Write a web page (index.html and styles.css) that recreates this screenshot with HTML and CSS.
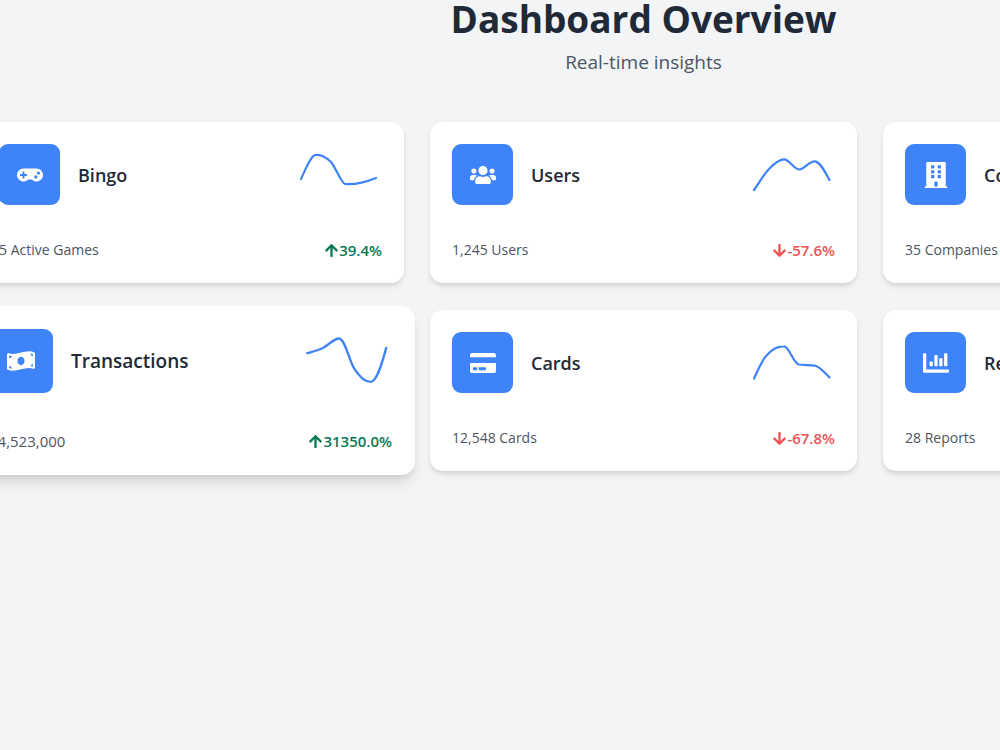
FILE: index.html
```html
<!DOCTYPE html>
<html lang="en">
<head>
<meta charset="utf-8">
<title>Dashboard Overview</title>
<link rel="stylesheet" href="styles.css">
</head>
<body>
<main class="dashboard">
  <header class="header">
    <h1 class="header-title">Dashboard Overview</h1>
    <p class="header-subtitle">Real-time insights</p>
  </header>
  <section class="cards">
    <article class="card">
      <div class="card-top">
        <span class="card-icon"><svg class="icon" viewBox="0 0 640 512" aria-hidden="true"><path d="M480.07 96H160a160 160 0 1 0 114.24 272h91.52A160 160 0 1 0 480.07 96zM248 268a12 12 0 0 1-12 12h-52v52a12 12 0 0 1-12 12h-24a12 12 0 0 1-12-12v-52H84a12 12 0 0 1-12-12v-24a12 12 0 0 1 12-12h52v-52a12 12 0 0 1 12-12h24a12 12 0 0 1 12 12v52h52a12 12 0 0 1 12 12zm216 76a40 40 0 1 1 40-40 40 40 0 0 1-40 40zm64-96a40 40 0 1 1 40-40 40 40 0 0 1-40 40z"/></svg></span>
        <h2 class="card-title">Bingo</h2>
        <svg class="spark" viewBox="0 0 86 61" aria-hidden="true"><path d="M5 35C10 24 15 12 19 11C24 10 30 13 35 18C40 24 45 39 49 40C59 41 70 38 80 34"/></svg>
      </div>
      <div class="card-bottom">
        <span class="card-value">5 Active Games</span>
        <span class="trend trend-up"><svg class="arrow" viewBox="0 0 448 512" aria-hidden="true"><path d="M34.9 289.5l-22.2-22.2c-9.4-9.4-9.4-24.6 0-33.9L207 39c9.4-9.4 24.6-9.4 33.9 0l194.3 194.3c9.4 9.4 9.4 24.6 0 33.9L413 289.4c-9.5 9.5-25 9.3-34.3-.4L264 168.6V456c0 13.3-10.7 24-24 24h-32c-13.3 0-24-10.7-24-24V168.6L69.2 289.1c-9.3 9.8-24.8 10-34.3.4z"/></svg>39.4%</span>
      </div>
    </article>
    <article class="card">
      <div class="card-top">
        <span class="card-icon"><svg class="icon" viewBox="0 0 640 512" aria-hidden="true"><path d="M96 224c35.3 0 64-28.7 64-64s-28.7-64-64-64-64 28.7-64 64 28.7 64 64 64zm448 0c35.3 0 64-28.7 64-64s-28.7-64-64-64-64 28.7-64 64 28.7 64 64 64zm32 32h-64c-17.6 0-33.5 7.1-45.1 18.6 40.3 22.1 68.9 62 75.1 109.4h66c17.7 0 32-14.3 32-32v-32c0-35.3-28.7-64-64-64zm-256 0c61.9 0 112-50.1 112-112S381.9 32 320 32 208 82.1 208 144s50.1 112 112 112zm76.8 32h-8.3c-20.8 10-43.9 16-68.5 16s-47.6-6-68.5-16h-8.3C179.6 288 128 339.6 128 403.2V432c0 26.5 21.5 48 48 48h288c26.5 0 48-21.5 48-48v-28.8c0-63.6-51.6-115.2-115.2-115.2zm-223.7-13.4C161.5 263.1 145.6 256 128 256H64c-35.3 0-64 28.7-64 64v32c0 17.7 14.3 32 32 32h65.9c6.3-47.4 34.9-87.3 75.2-109.4z"/></svg></span>
        <h2 class="card-title">Users</h2>
        <svg class="spark" viewBox="0 0 86 61" aria-hidden="true"><path d="M5 46C10 39 15 30 20 25C25 19.5 30 15.5 35 15.3C40 15 45 25.5 50.5 25.5C55 25.5 60 17.3 65.5 17.3C71 17.3 76 28 80.5 36"/></svg>
      </div>
      <div class="card-bottom">
        <span class="card-value">1,245 Users</span>
        <span class="trend trend-down"><svg class="arrow" viewBox="0 0 448 512" aria-hidden="true"><path transform="matrix(1 0 0 -1 0 512)" d="M34.9 289.5l-22.2-22.2c-9.4-9.4-9.4-24.6 0-33.9L207 39c9.4-9.4 24.6-9.4 33.9 0l194.3 194.3c9.4 9.4 9.4 24.6 0 33.9L413 289.4c-9.5 9.5-25 9.3-34.3-.4L264 168.6V456c0 13.3-10.7 24-24 24h-32c-13.3 0-24-10.7-24-24V168.6L69.2 289.1c-9.3 9.8-24.8 10-34.3.4z"/></svg>-57.6%</span>
      </div>
    </article>
    <article class="card">
      <div class="card-top">
        <span class="card-icon"><svg class="icon" viewBox="0 0 448 512" aria-hidden="true"><path fill-rule="evenodd" d="M436 480h-20V24c0-13.3-10.7-24-24-24H56C42.7 0 32 10.7 32 24v456H12c-6.6 0-12 5.4-12 12v20h448v-20c0-6.6-5.4-12-12-12zM128 64h64v64h-64zM256 64h64v64h-64zM128 160h64v64h-64zM256 160h64v64h-64zM128 256h64v64h-64zM256 256h64v64h-64zM192 384h64v96h-64z"/></svg></span>
        <h2 class="card-title">Companies</h2>
      </div>
      <div class="card-bottom">
        <span class="card-value">35 Companies</span>
      </div>
    </article>
    <article class="card card-raised">
      <div class="card-top">
        <span class="card-icon"><svg class="icon" viewBox="0 0 640 512" aria-hidden="true"><path d="M621.16 54.46C582.37 38.19 543.55 32 504.75 32c-123.17-.01-246.33 62.34-369.5 62.34-30.89 0-61.76-3.92-92.65-13.72-3.47-1.1-6.95-1.62-10.35-1.62C15.04 79 0 92.32 0 110.81v317.26c0 12.63 7.23 24.6 18.84 29.46C57.63 473.81 96.45 480 135.25 480c123.17 0 246.34-62.35 369.51-62.35 30.89 0 61.76 3.92 92.65 13.72 3.47 1.1 6.95 1.62 10.35 1.62 17.21 0 32.25-13.32 32.25-31.81V83.93c-.01-12.64-7.24-24.6-18.85-29.47zM48 132.22c20.12 5.04 41.12 7.57 62.72 8.93C104.84 170.54 79 192.69 48 192.69v-60.47zm0 285v-47.78c34.37 0 62.18 27.27 63.71 61.4-22.53-1.81-43.59-6.31-63.71-13.62zM320 352c-44.19 0-80-42.99-80-96 0-53.02 35.82-96 80-96s80 42.98 80 96c0 53.03-35.83 96-80 96zm272 27.78c-17.52-4.39-35.71-6.85-54.32-8.44 5.87-26.08 27.5-45.88 54.32-49.28v57.72zm0-236.11c-30.89-3.91-54.86-29.7-55.81-61.55 19.54 2.17 38.09 6.23 55.81 12.66v48.89z"/></svg></span>
        <h2 class="card-title">Transactions</h2>
        <svg class="spark" viewBox="0 0 86 61" aria-hidden="true"><path d="M5 23C10 21.5 15 20.5 20 18C25 15.5 30 9.5 35 9C41 8.5 45 30 50 38C54 44 60 50.5 65.5 50.5C72 50.5 77 30 80.5 18"/></svg>
      </div>
      <div class="card-bottom">
        <span class="card-value">$4,523,000</span>
        <span class="trend trend-up"><svg class="arrow" viewBox="0 0 448 512" aria-hidden="true"><path d="M34.9 289.5l-22.2-22.2c-9.4-9.4-9.4-24.6 0-33.9L207 39c9.4-9.4 24.6-9.4 33.9 0l194.3 194.3c9.4 9.4 9.4 24.6 0 33.9L413 289.4c-9.5 9.5-25 9.3-34.3-.4L264 168.6V456c0 13.3-10.7 24-24 24h-32c-13.3 0-24-10.7-24-24V168.6L69.2 289.1c-9.3 9.8-24.8 10-34.3.4z"/></svg>31350.0%</span>
      </div>
    </article>
    <article class="card">
      <div class="card-top">
        <span class="card-icon"><svg class="icon" viewBox="0 0 576 512" aria-hidden="true"><path d="M0 432c0 26.5 21.5 48 48 48h480c26.5 0 48-21.5 48-48V256H0v176zm192-68c0-6.6 5.4-12 12-12h136c6.6 0 12 5.4 12 12v40c0 6.6-5.4 12-12 12H204c-6.6 0-12-5.4-12-12v-40zm-128 0c0-6.6 5.4-12 12-12h72c6.6 0 12 5.4 12 12v40c0 6.6-5.4 12-12 12H76c-6.6 0-12-5.4-12-12v-40zM576 80v48H0V80c0-26.5 21.5-48 48-48h480c26.5 0 48 21.5 48 48z"/></svg></span>
        <h2 class="card-title">Cards</h2>
        <svg class="spark" viewBox="0 0 86 61" aria-hidden="true"><path d="M5 46.5C9 38 13 28 18 23C23 17 30 14.3 35 14.3C40 14 44 31 50 32.5C56 33.5 62 32.5 67 34C72 36 76 41 80.5 45.5"/></svg>
      </div>
      <div class="card-bottom">
        <span class="card-value">12,548 Cards</span>
        <span class="trend trend-down"><svg class="arrow" viewBox="0 0 448 512" aria-hidden="true"><path transform="matrix(1 0 0 -1 0 512)" d="M34.9 289.5l-22.2-22.2c-9.4-9.4-9.4-24.6 0-33.9L207 39c9.4-9.4 24.6-9.4 33.9 0l194.3 194.3c9.4 9.4 9.4 24.6 0 33.9L413 289.4c-9.5 9.5-25 9.3-34.3-.4L264 168.6V456c0 13.3-10.7 24-24 24h-32c-13.3 0-24-10.7-24-24V168.6L69.2 289.1c-9.3 9.8-24.8 10-34.3.4z"/></svg>-67.8%</span>
      </div>
    </article>
    <article class="card">
      <div class="card-top">
        <span class="card-icon"><svg class="icon" viewBox="0 0 512 512" aria-hidden="true"><path d="M332.8 320h38.4c6.4 0 12.8-6.4 12.8-12.8V172.8c0-6.4-6.4-12.8-12.8-12.8h-38.4c-6.4 0-12.8 6.4-12.8 12.8v134.4c0 6.4 6.4 12.8 12.8 12.8zm96 0h38.4c6.4 0 12.8-6.4 12.8-12.8V76.8c0-6.4-6.4-12.8-12.8-12.8h-38.4c-6.4 0-12.8 6.4-12.8 12.8v230.4c0 6.4 6.4 12.8 12.8 12.8zm-288 0h38.4c6.4 0 12.8-6.4 12.8-12.8v-70.4c0-6.4-6.4-12.8-12.8-12.8h-38.4c-6.4 0-12.8 6.4-12.8 12.8v70.4c0 6.4 6.4 12.8 12.8 12.8zm96 0h38.4c6.4 0 12.8-6.4 12.8-12.8V108.8c0-6.4-6.4-12.8-12.8-12.8h-38.4c-6.4 0-12.8 6.4-12.8 12.8v198.4c0 6.4 6.4 12.8 12.8 12.8zM496 384H64V80c0-8.84-7.16-16-16-16H16C7.16 64 0 71.16 0 80v336c0 17.67 14.33 32 32 32h464c8.84 0 16-7.16 16-16v-32c0-8.84-7.16-16-16-16z"/></svg></span>
        <h2 class="card-title">Reports</h2>
      </div>
      <div class="card-bottom">
        <span class="card-value">28 Reports</span>
      </div>
    </article>
  </section>
</main>
</body>
</html>
```

FILE: styles.css
```css
* {
  box-sizing: border-box;
}

body {
  margin: 0;
  min-height: 100vh;
  overflow: hidden;
  background: #f3f4f6;
  color: #1f2937;
  font-family: "Segoe UI", "Open Sans", "Noto Sans", sans-serif;
}

/* The board is wider than the window and runs off both sides. */
.dashboard {
  margin: 0 -310px 0 -23px;
}

.header {
  padding-bottom: 46px;
  text-align: center;
}

.header-title {
  margin: 0;
  font-size: 37px;
  font-weight: 700;
  line-height: 38px;
}

.header-subtitle {
  margin: 10px 0 0;
  color: #4b5563;
  font-size: 19px;
  line-height: 28px;
}

.cards {
  display: grid;
  grid-template-columns: repeat(3, 1fr);
  gap: 27px 26px;
}

.card {
  display: flex;
  flex-direction: column;
  gap: 34px;
  padding: 22px;
  border-radius: 13px;
  background: #fff;
  box-shadow: 0 4px 6px -1px rgba(0, 0, 0, 0.1), 0 2px 4px -1px rgba(0, 0, 0, 0.08);
}

.card-top {
  display: flex;
  align-items: center;
  gap: 18px;
}

.card-icon {
  display: flex;
  align-items: center;
  justify-content: center;
  width: 61px;
  height: 61px;
  border-radius: 9px;
  background: #3f83f8;
}

.icon {
  width: 26px;
  height: 26px;
  fill: #fff;
}

.card-title {
  margin: 0;
  font-size: 18px;
  font-weight: 600;
  line-height: 28px;
}

.spark {
  width: 86px;
  height: 61px;
  margin-left: auto;
  fill: none;
  stroke: #3f83f8;
  stroke-width: 2.2;
  stroke-linecap: round;
}

.card-bottom {
  display: flex;
  align-items: center;
  justify-content: space-between;
  line-height: 22px;
}

.card-value {
  color: #4b5563;
  font-size: 14px;
}

.trend {
  display: flex;
  align-items: center;
  font-size: 15px;
  font-weight: 600;
}

.trend-up {
  color: #057a55;
}

.trend-down {
  color: #f05252;
}

.arrow {
  width: 15px;
  height: 15px;
  fill: currentColor;
}

.card-raised {
  gap: 37px;
  margin: -4px -11px;
  padding: 23px;
  border-radius: 14px;
  box-shadow: 0 10px 15px -3px rgba(0, 0, 0, 0.12), 0 4px 6px -2px rgba(0, 0, 0, 0.08);
}

.card-raised .card-icon {
  width: 64px;
  height: 64px;
}

.card-raised .icon {
  width: 28px;
  height: 28px;
}

.card-raised .card-title {
  font-size: 19px;
}

.card-raised .spark {
  width: 90px;
  height: 64px;
}

.card-raised .card-value {
  font-size: 15px;
}
```
